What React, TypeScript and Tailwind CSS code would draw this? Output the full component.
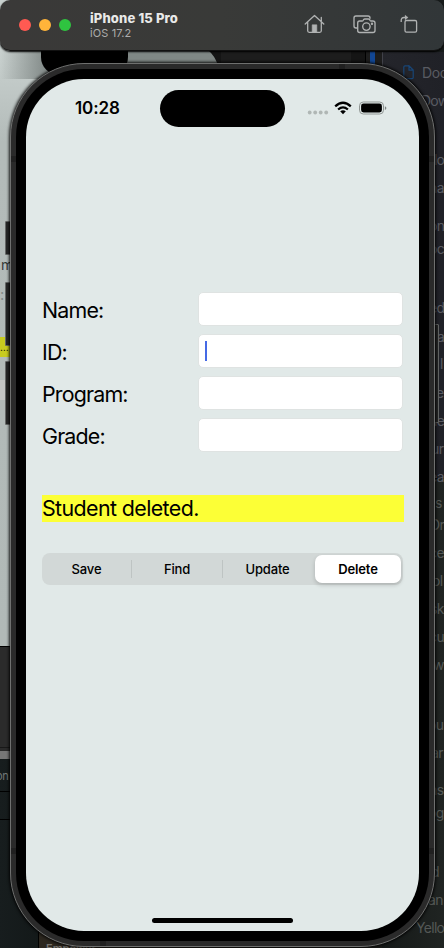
import React from "react";

const font = "font-['Inter','Liberation_Sans',sans-serif]";

const finderRows = [
  { text: "Doc", cls: "mt-[13px] ml-[39px] tracking-[-0.4px]" },
  { text: "Dow", cls: "mt-[12px] ml-[38px] tracking-[-0.8px]" },
  { text: "lo", cls: "mt-[43px] ml-[51px] tracking-[-0.9px]" },
  { text: "na", cls: "mt-[12px] ml-[46px] tracking-[-0.6px]" },
  { text: "on", cls: "mt-[22px] ml-[46px] tracking-[-0.6px]" },
  { text: "oc", cls: "mt-[7px] ml-[46px] tracking-[-0.6px]" },
  { text: "ed", cls: "mt-[43px] ml-[46px] tracking-[-0.6px]" },
  { text: "a", cls: "mt-[13px] ml-[54px]" },
  { text: "l", cls: "mt-[11px] ml-[57px]" },
  { text: "e", cls: "mt-[13px] ml-[53px]" },
  { text: "ue", cls: "mt-[12px] ml-[46px] tracking-[-0.6px]" },
  { text: "ur", cls: "mt-[12px] ml-[48px] tracking-[-0.6px]" },
  { text: "ea", cls: "mt-[12px] ml-[46px] tracking-[-0.6px]" },
];

const lowerRows = [
  { text: "s", cls: "mt-[16px] ml-[53px]" },
  { text: "Dr", cls: "mt-[6px] ml-[48px] tracking-[-0.6px]" },
  { text: "ce", cls: "mt-[12px] ml-[47px] tracking-[-0.6px]" },
  { text: "ol", cls: "mt-[12px] ml-[50px] tracking-[-0.6px]" },
  { text: "sk", cls: "mt-[12px] ml-[48px] tracking-[-0.6px]" },
  { text: "cu", cls: "mt-[12px] ml-[47px] tracking-[-0.6px]" },
  { text: "w", cls: "mt-[12px] ml-[51px]" },
  { text: "ou", cls: "mt-[44px] ml-[46px] tracking-[-0.6px]" },
  { text: "ar", cls: "mt-[12px] ml-[49px] tracking-[-0.6px]" },
  { text: "ns", cls: "mt-[21px] ml-[47px] tracking-[-0.6px]" },
  { text: "og", cls: "mt-[7px] ml-[46px] tracking-[-0.6px]" },
  { text: "d", cls: "mt-[43px] ml-[49px]" },
  { text: "an", cls: "mt-[12px] ml-[46px] tracking-[-0.6px]" },
  { text: "Yello", cls: "mt-[12px] ml-[34px] tracking-[-0.7px]" },
];

function LeftWindows() {
  return (
    <div className="flex w-[221px] flex-col overflow-hidden">
      <div className="flex h-[647px] flex-col border-b border-black bg-gradient-to-b from-[#c9d1cf] from-[8%] via-[#b3bbb9] via-[22%] to-[#b1b9b7] pt-[51px]">
        <div className="flex h-[28px] bg-gradient-to-r from-transparent to-[#7f8785] to-[22%] pl-[41px]">
          <div className="h-[24px] w-[87px] rounded-b-[18px] bg-black" />
          <div className="-ml-[10px] -z-10 h-[14px] flex-1 bg-[#6f7573]" />
          <svg className="-ml-[11px]" width="12" height="14"><path d="M0 0Q5 4 9 14H12V0Z" fill="#151515" /></svg>
        </div>
        <div className="mt-[177px] pl-px text-[14px] leading-[18px] text-[#343837]">m</div>
        <div className="mt-[12px] h-[18px] text-[15px] leading-[18px] text-[#858d8b]">:</div>
        <div className="mt-[33px] h-[20px] w-[10px] bg-[#c8cb1f] text-[10px] leading-[20px] text-black">…</div>
        <div className="mt-[23px] h-[20px] w-[10px] bg-[#c4c6c5]" />
      </div>
      <div className="h-[112px] bg-[#2b2b2b]">
        <div className="mt-[100px] border-t border-[#181818] pt-[3px]">
          <div className="h-[8px] bg-[#777777]" />
        </div>
      </div>
      <div className="flex-1 bg-gradient-to-r from-[#171d1e] to-[#121717] to-[25%] pt-[9px]">
        <div className="-ml-[4px] h-[24px] border-b border-black text-[11px] leading-[17px] tracking-[-0.3px] text-[#737979]">on</div>
        <div className="h-[28px] border-b border-black" />
      </div>
    </div>
  );
}

function Desktop() {
  return (
    <div className="isolate flex h-full bg-[#171b1b]">
      <LeftWindows />
      <div className="flex w-[161px] bg-[#1d1d1d] pt-[51px]">
        <div className="ml-[130px] h-[40px] w-[15px] border-r border-black bg-[#151515]" />
        <div className="ml-[4px] h-[40px] w-[5px] bg-[#124795]" />
      </div>
      <div className="flex w-[62px] flex-col overflow-hidden pt-[52px] text-[14px] leading-[16px]">
        <div className="relative h-[426px] border-l border-[#41424a] bg-gradient-to-r from-[#24252b] to-[#202127] text-[#595b62]">
          <svg className="absolute left-[20px] top-[13px]" width="11" height="15" viewBox="0 0 11 15" fill="none" stroke="#184576" strokeWidth="1.2"><path d="M6 .8H2Q.8.8.8 2v10.5q0 1.2 1.2 1.2h7q1.2 0 1.2-1.2V5L6 .8v4.4h4" /></svg>
          <div className="flex flex-col">
            {finderRows.map((r, i) => <span key={i} className={r.cls}>{r.text}</span>)}
          </div>
        </div>
        <div className="flex flex-1 flex-col border-t border-[#090909] bg-gradient-to-r from-[#151918] to-[#202422] text-[#545856]">
          {lowerRows.map((r, i) => <span key={i} className={r.cls}>{r.text}</span>)}
        </div>
      </div>
      <div className="absolute bottom-0 left-[38px] h-[58px] w-[344px] border-l border-black bg-gradient-to-r from-[#2c271f] to-[#1b1c1a] pl-[7px] pt-[51px] text-[11px] font-semibold leading-[14px] text-[#77746f]">Empower</div>
    </div>
  );
}

function TitleBar() {
  return (
    <header className="absolute inset-x-0 top-0 flex h-[51px] items-center rounded-[10px] border-b border-[#111] bg-gradient-to-r from-[#3a3938] via-[#393a38] to-[#313638] pl-[19px] pr-[26px] shadow-[0_1px_2px_#000]">
      <div className="flex gap-[8px]">
        <span className="size-[12px] rounded-full bg-[#ff5a52]" />
        <span className="size-[12px] rounded-full bg-[#ffb43a]" />
        <span className="size-[12px] rounded-full bg-[#2fc440]" />
      </div>
      <div className="ml-[19px] mt-px flex-1">
        <div className="text-[13px] font-extrabold leading-[15px] tracking-[0.15px] text-[#e9e9e8]">iPhone 15 Pro</div>
        <div className="text-[11px] leading-[14px] tracking-[0.1px] text-[#adadac]">iOS 17.2</div>
      </div>
      <div className="mb-[3px] flex items-center text-[#b0b2b2]">
        <svg width="21" height="20" viewBox="0 0 21 20" fill="none" stroke="currentColor" strokeWidth="1.3" strokeLinecap="round" strokeLinejoin="round"><path d="M1.2 10 10.5 1.5 19.8 10M3.7 8.2v8.6q0 1.5 1.5 1.5h10.6q1.5 0 1.5-1.5V8.2M17.3 7V3.4" /><path d="M8.2 18v-7.2h4.6V18Z" fill="currentColor" strokeWidth=".6" /></svg>
        <svg className="ml-[28px] mt-[2px]" width="23" height="19" viewBox="0 0 23 19" fill="none" stroke="currentColor" strokeWidth="1.35" strokeLinejoin="round"><path d="M4.7 13H3Q1 13 1 11V3q0-2 2-2h12q2 0 2 2v.7" /><path d="M6.7 6H9q.8 0 1.2-.8.5-1.2 1.5-1.2h3.8q1 0 1.5 1.2.4.8 1.2.8h1.6Q22 6 22 8v7.5q0 2-2 2H6.7q-2 0-2-2V8q0-2 2-2Z" /><circle cx="13.4" cy="11.6" r="3.7" /><circle cx="19" cy="8.7" r=".5" fill="currentColor" /></svg>
        <svg className="ml-[24px]" width="18" height="20" viewBox="0 0 18 20" fill="none" stroke="currentColor" strokeWidth="1.3"><rect x="5" y="6.5" width="11.6" height="11.6" rx="1.4" /><path d="M1.2 8V6.6Q1.2 3.5 4 3.5h2" /><path d="m5 1 3.2 2.5L5 6Z" fill="currentColor" strokeWidth=".2" /></svg>
      </div>
    </header>
  );
}

function StatusBar() {
  return (
    <div className="flex h-[58px] items-start pl-[49px] pt-[11px]">
      <span className="mt-[8px] w-[85px] text-[17px] font-semibold leading-[21px] tracking-[-0.1px] text-black">10:28</span>
      <div className="h-[37px] w-[125px] rounded-full bg-black" />
      <svg className="ml-[22px] mt-[9px]" width="81" height="18" viewBox="0 0 81 18">
        <g fill="#b0b7b5"><circle cx="2.7" cy="13.5" r="1.9" /><circle cx="8.2" cy="13.5" r="1.9" /><circle cx="13.7" cy="13.5" r="1.9" /><circle cx="19.2" cy="13.5" r="1.9" /></g>
        <g fill="none" stroke="#000" strokeWidth="2.3"><path d="M28.2 7.3q7.8-7 15.6 0M31.1 10.5q4.9-4.2 9.8 0" /></g>
        <path d="M33.2 12.3q2.8-2.2 5.6 0L36 15.2Z" />
        <rect x="52.5" y="3" width="24" height="12" rx="3.8" fill="none" stroke="#909694" />
        <rect x="54.1" y="4.6" width="20.8" height="8.8" rx="2.4" />
        <path d="M77.9 7.2q1.5.4 1.5 1.9t-1.5 1.9Z" fill="#7f8583" />
      </svg>
    </div>
  );
}

function StudentForm() {
  const fields = ["Name:", "ID:", "Program:", "Grade:"];
  return (
    <main className="ml-[16px] mt-[155px] w-[362px]">
      <div className="flex w-[361px] flex-col gap-[8px]">
        {fields.map((f) => (
          <label key={f} className="flex h-[34px] items-center justify-between">
            <span className="pt-[2px] text-[21.4px] leading-[26px] tracking-[-0.82px] text-black">{f}</span>
            <span className="flex h-[34px] w-[205px] items-center rounded-[5px] border border-[#dfe3e2] bg-white pl-[6px]">
              {f === "ID:" && <i className="mb-px h-[20px] w-[2px] bg-[#456ae5]" />}
            </span>
          </label>
        ))}
      </div>
      <div className="mt-[43px] h-[27px] bg-[#fcff36] text-[21.4px] leading-[27px] tracking-[-0.6px] text-black">Student deleted.</div>
      <div className="mt-[31px] flex h-[32px] w-[361px] items-center rounded-[8px] bg-[#d2d8d7] p-[2px] text-center text-[13px] font-medium leading-[28px] tracking-[-0.15px] text-black">
        <span className="w-[87px] pr-[2px]">Save</span>
        <i className="h-[18px] w-px bg-[#bec4c3]" />
        <span className="w-[90px]">Find</span>
        <i className="h-[18px] w-px bg-[#bec4c3]" />
        <span className="flex-1 pr-[3px]">Update</span>
        <span className="h-[28px] w-[86px] rounded-[7px] bg-white font-semibold shadow-[0_2px_4px_rgba(0,0,0,0.18)]">Delete</span>
      </div>
    </main>
  );
}

function Phone() {
  const button = "rounded-[1px] border border-[#646665] bg-[#252626]";
  const band = "bg-[#202020]";
  return (
    <div className="absolute left-[5px] top-[63px] h-[884px] w-[434px]">
      <div className="flex justify-between">
        <div className="flex w-[8px] flex-col pt-[158px]">
          <i className={`h-[34px] ${button}`} />
          <i className={`mt-[27px] h-[64px] ${button}`} />
          <i className={`mt-[15px] h-[64px] ${button}`} />
        </div>
        <i className={`mt-[261px] h-[99px] w-[6px] ${button}`} />
      </div>
      <div className="absolute inset-y-0 left-[5px] right-[4px] rounded-[74px] border border-[#6f706f] bg-[#2a2a2a] p-[5px] shadow-[0_0_3px_1px_rgba(0,0,0,0.9)]">
        <div className="absolute inset-x-0 inset-y-[92px] grid grid-cols-2 content-between">
          <i className={`h-[6px] w-[5px] ${band}`} />
          <i className={`h-[6px] w-[5px] justify-self-end ${band}`} />
          <i className={`h-[6px] w-[5px] ${band}`} />
          <i className={`h-[6px] w-[5px] justify-self-end ${band}`} />
        </div>
        <div className="absolute inset-x-[89px] inset-y-0 flex flex-col justify-between">
          <i className={`h-[5px] w-[6px] self-end ${band}`} />
          <i className={`h-[5px] w-[6px] ${band}`} />
        </div>
        <div className="relative h-full rounded-[68px] bg-black p-[10px]">
          <div className="flex h-full flex-col overflow-hidden rounded-[58px] bg-[#e1e9e8] pb-[8px]">
            <StatusBar />
            <StudentForm />
            <div className="ml-[126px] mt-auto h-[5px] w-[141px] rounded-full bg-black" />
          </div>
        </div>
      </div>
    </div>
  );
}

export default function App() {
  return (
    <div className={`relative h-[948px] w-[444px] overflow-hidden ${font}`}>
      <Desktop />
      <TitleBar />
      <Phone />
    </div>
  );
}
